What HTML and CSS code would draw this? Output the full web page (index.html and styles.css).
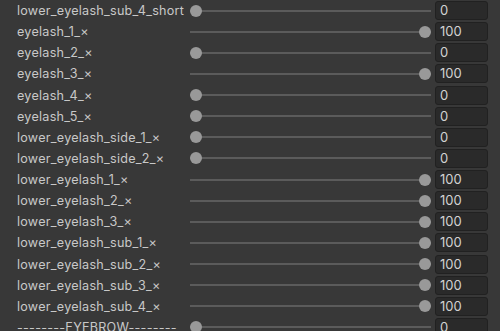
FILE: index.html
```html
<!DOCTYPE html>
<html>
<head>
    <title>Blend Shapes</title>
    <link rel="stylesheet" href="styles.css">
</head>
<body>
    <div class="inspector">
        <div class="row"><span class="label">lower_eyelash_sub_4_short</span><div class="slider"><div class="track"></div><div class="rail"><div class="thumb" style="left: 0%"></div></div></div><div class="field">0</div></div>
        <div class="row"><span class="label">eyelash_1_×</span><div class="slider"><div class="track"></div><div class="rail"><div class="thumb" style="left: 100%"></div></div></div><div class="field">100</div></div>
        <div class="row"><span class="label">eyelash_2_×</span><div class="slider"><div class="track"></div><div class="rail"><div class="thumb" style="left: 0%"></div></div></div><div class="field">0</div></div>
        <div class="row"><span class="label">eyelash_3_×</span><div class="slider"><div class="track"></div><div class="rail"><div class="thumb" style="left: 100%"></div></div></div><div class="field">100</div></div>
        <div class="row"><span class="label">eyelash_4_×</span><div class="slider"><div class="track"></div><div class="rail"><div class="thumb" style="left: 0%"></div></div></div><div class="field">0</div></div>
        <div class="row"><span class="label">eyelash_5_×</span><div class="slider"><div class="track"></div><div class="rail"><div class="thumb" style="left: 0%"></div></div></div><div class="field">0</div></div>
        <div class="row"><span class="label">lower_eyelash_side_1_×</span><div class="slider"><div class="track"></div><div class="rail"><div class="thumb" style="left: 0%"></div></div></div><div class="field">0</div></div>
        <div class="row"><span class="label">lower_eyelash_side_2_×</span><div class="slider"><div class="track"></div><div class="rail"><div class="thumb" style="left: 0%"></div></div></div><div class="field">0</div></div>
        <div class="row"><span class="label">lower_eyelash_1_×</span><div class="slider"><div class="track"></div><div class="rail"><div class="thumb" style="left: 100%"></div></div></div><div class="field">100</div></div>
        <div class="row"><span class="label">lower_eyelash_2_×</span><div class="slider"><div class="track"></div><div class="rail"><div class="thumb" style="left: 100%"></div></div></div><div class="field">100</div></div>
        <div class="row"><span class="label">lower_eyelash_3_×</span><div class="slider"><div class="track"></div><div class="rail"><div class="thumb" style="left: 100%"></div></div></div><div class="field">100</div></div>
        <div class="row"><span class="label">lower_eyelash_sub_1_×</span><div class="slider"><div class="track"></div><div class="rail"><div class="thumb" style="left: 100%"></div></div></div><div class="field">100</div></div>
        <div class="row"><span class="label">lower_eyelash_sub_2_×</span><div class="slider"><div class="track"></div><div class="rail"><div class="thumb" style="left: 100%"></div></div></div><div class="field">100</div></div>
        <div class="row"><span class="label">lower_eyelash_sub_3_×</span><div class="slider"><div class="track"></div><div class="rail"><div class="thumb" style="left: 100%"></div></div></div><div class="field">100</div></div>
        <div class="row"><span class="label">lower_eyelash_sub_4_×</span><div class="slider"><div class="track"></div><div class="rail"><div class="thumb" style="left: 100%"></div></div></div><div class="field">100</div></div>
        <div class="row"><span class="label">--------EYEBROW--------</span><div class="slider"><div class="track"></div><div class="rail"><div class="thumb" style="left: 0%"></div></div></div><div class="field">0</div></div>
    </div>
</body>
</html>
```

FILE: styles.css
```css
body {
    margin: 0;
    background-color: #383838;
    font-family: Inter, "Noto Sans", sans-serif;
    font-size: 12.6px;
    color: #c8c8c8;
    overflow: hidden;
}
.inspector {
    padding: 0 12px 0 17px;
}
.row {
    display: grid;
    grid-template-columns: 169px 241px 53px;
    column-gap: 4px;
    align-items: center;
    height: 21.14px;
}
.label {
    white-space: nowrap;
    overflow: hidden;
    letter-spacing: 0.25px;
}
.slider {
    position: relative;
    height: 12px;
}
.track {
    position: absolute;
    left: 0;
    right: 0;
    top: 5px;
    height: 2px;
    background-color: #5b5b5b;
}
.rail {
    position: absolute;
    left: 6px;
    right: 6px;
    top: 0;
    bottom: 0;
}
.thumb {
    position: absolute;
    top: 0;
    width: 12px;
    height: 12px;
    margin-left: -6px;
    border-radius: 50%;
    background-color: #999999;
}
.field {
    height: 19px;
    line-height: 17px;
    padding-left: 4px;
    background-color: #2a2a2a;
    border: 1px solid #212121;
    border-radius: 3px;
    box-sizing: border-box;
    font-size: 13px;
    color: #d2d2d2;
}
```
